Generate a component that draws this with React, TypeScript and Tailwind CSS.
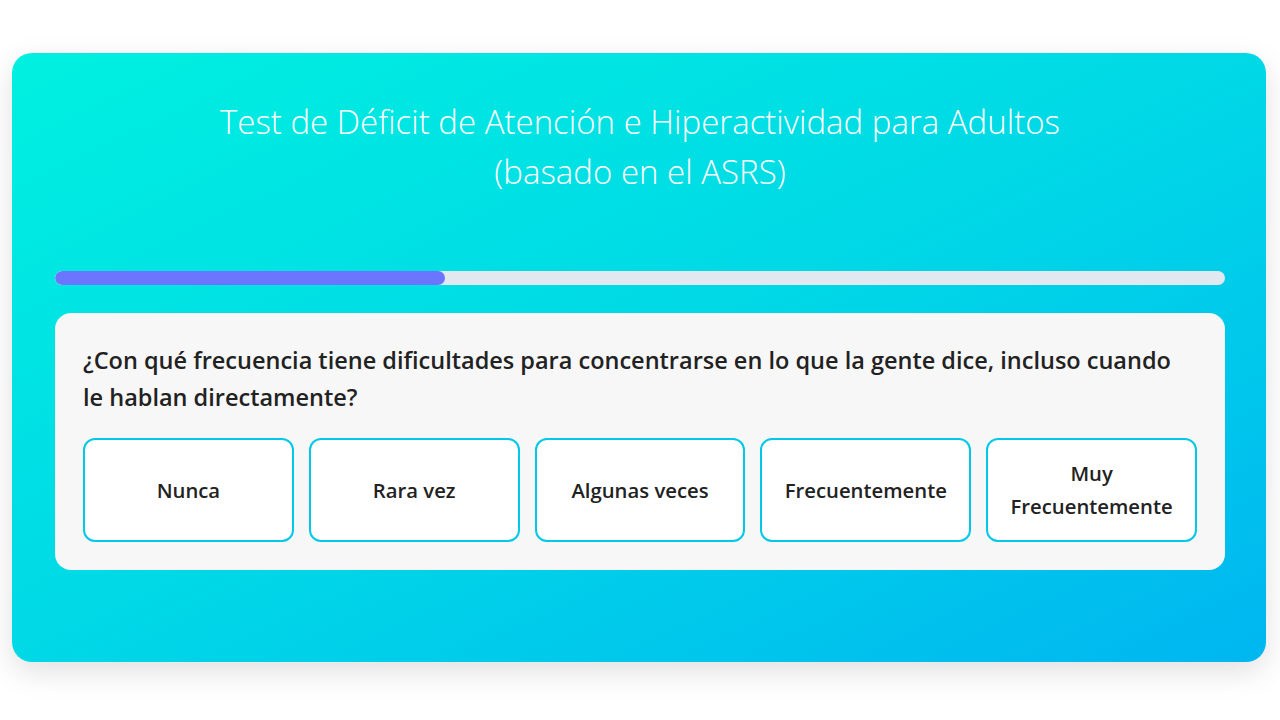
import { useState } from "react";

const OPTIONS = ["Nunca", "Rara vez", "Algunas veces", "Frecuentemente", "Muy Frecuentemente"];

export default function App() {
  const [answer, setAnswer] = useState<string | null>(null);
  const progress = 33.3;

  return (
    <div
      className="min-h-screen bg-white pl-3 pr-[14px] pt-[53px] pb-10"
      style={{ fontFamily: '"Open Sans", "Noto Sans", sans-serif' }}
    >
      <div className="rounded-[20px] bg-gradient-to-br from-[#00f0e0] via-[#00d8e6] to-[#00b6f0] pl-[43px] pr-[41px] pt-[44px] pb-[92px] shadow-[0_10px_30px_rgba(0,0,0,0.12)]">
        <h1 className="text-center text-[33px] font-light leading-[50px] text-white">
          Test de Déficit de Atención e Hiperactividad para Adultos
          <br />
          (basado en el ASRS)
        </h1>

        {/* Progress */}
        <div className="mt-[74px] h-[14px] w-full overflow-hidden rounded-full bg-[#e2e8f0]">
          <div className="h-full rounded-full bg-[#6c75ff]" style={{ width: `${progress}%` }} />
        </div>

        {/* Question */}
        <div className="mt-[28px] rounded-2xl bg-[#f7f7f7] px-[28px] pt-[29px] pb-[28px]">
          <p className="pr-[16px] text-[23.5px] font-semibold leading-[37px] text-[#222]">
            ¿Con qué frecuencia tiene dificultades para concentrarse en lo que la gente dice, incluso cuando le hablan directamente?
          </p>
          <div className="mt-[22px] grid grid-cols-5 gap-[15px]">
            {OPTIONS.map((o) => (
              <button
                key={o}
                type="button"
                onClick={() => setAnswer(o)}
                className={`flex h-[104px] items-center justify-center rounded-xl border-2 border-[#00c8e8] px-4 text-center text-[20.3px] font-semibold leading-[33px] text-[#222] ${
                  answer === o ? "bg-[#e6fbff]" : "bg-white"
                }`}
              >
                {o}
              </button>
            ))}
          </div>
        </div>
      </div>
    </div>
  );
}
